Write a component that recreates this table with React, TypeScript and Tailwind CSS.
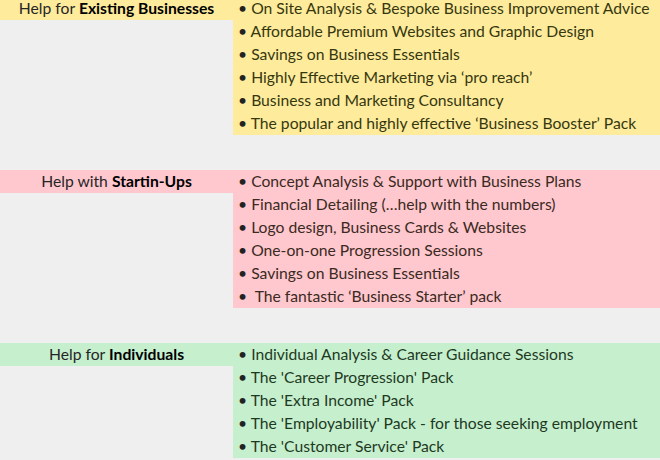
import React from 'react';

interface Section {
  lead: string;
  title: string;
  bg: string;
  text: string;
  items: string[];
}

const sections: Section[] = [
  {
    lead: 'Help for',
    title: 'Existing Businesses',
    bg: 'bg-[#ffeb9c]',
    text: 'text-[#35380f]',
    items: [
      'On Site Analysis & Bespoke Business Improvement Advice',
      'Affordable Premium Websites and Graphic Design',
      'Savings on Business Essentials',
      'Highly Effective Marketing via \u2018pro reach\u2019',
      'Business and Marketing Consultancy',
      'The popular and highly effective \u2018Business Booster\u2019 Pack',
    ],
  },
  {
    lead: 'Help with',
    title: 'Startin-Ups',
    bg: 'bg-[#ffc7ce]',
    text: 'text-[#3a2a22]',
    items: [
      'Concept Analysis & Support with Business Plans',
      'Financial Detailing (\u2026help with the numbers)',
      'Logo design, Business Cards & Websites',
      'One-on-one Progression Sessions',
      'Savings on Business Essentials',
      '\u00a0The fantastic \u2018Business Starter\u2019 pack',
    ],
  },
  {
    lead: 'Help for',
    title: 'Individuals',
    bg: 'bg-[#c6efce]',
    text: 'text-[#1e3a1e]',
    items: [
      'Individual Analysis & Career Guidance Sessions',
      "The 'Career Progression' Pack",
      "The 'Extra Income' Pack",
      "The 'Employability' Pack - for those seeking employment",
      "The 'Customer Service' Pack",
    ],
  },
];

export default function App() {
  return (
    <div className="w-[660px] h-[460px] overflow-hidden bg-[#efefef] font-['Lato',sans-serif] text-[15.7px] leading-[23px]">
      <div className="-mt-[3px] flex flex-col gap-[35px]">
        {sections.map((s) => (
          <div key={s.title} className="flex items-start">
            <div className={`w-[233px] h-[23px] text-center text-[#262626] ${s.bg}`}>
              {s.lead} <span className="font-bold text-black">{s.title}</span>
            </div>
            <ul className={`flex-1 pl-[5px] ${s.bg} ${s.text}`}>
              {s.items.map((item) => (
                <li key={item} className="h-[23px] whitespace-nowrap">
                  <span className="text-[#222]">{'\u2022'}</span> {item}
                </li>
              ))}
            </ul>
          </div>
        ))}
      </div>
    </div>
  );
}
